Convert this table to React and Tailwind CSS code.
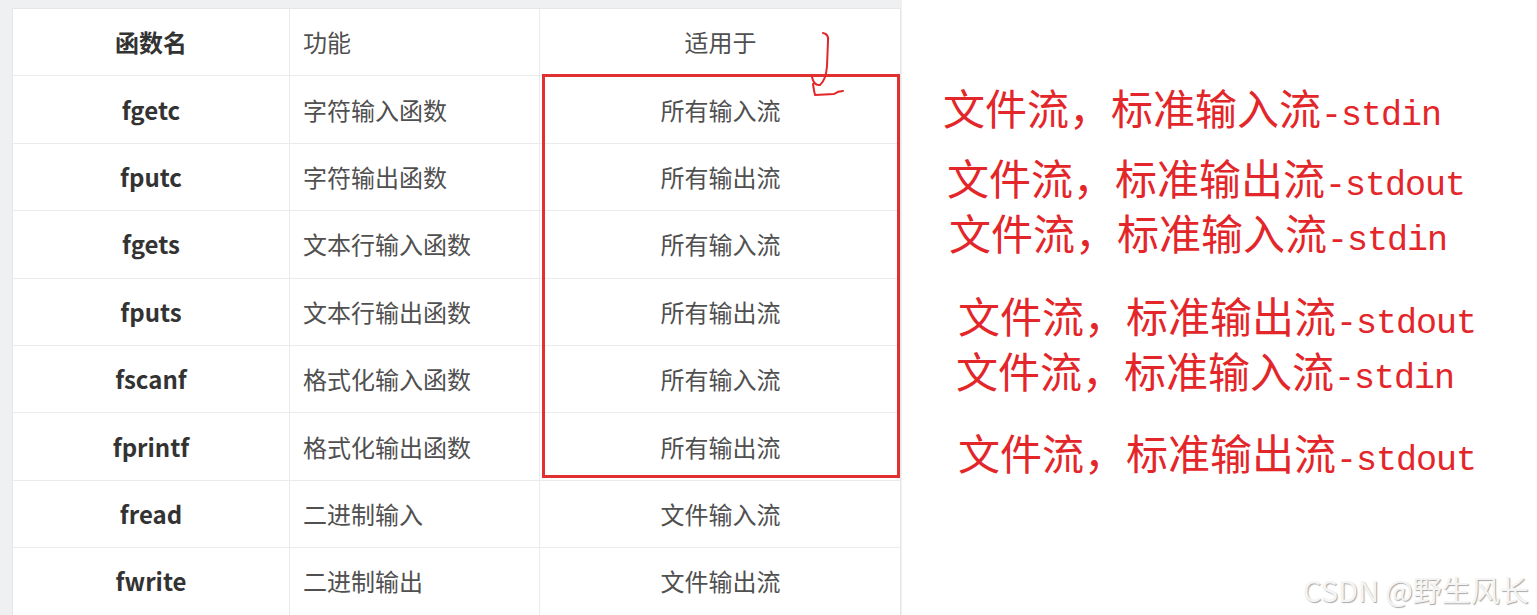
import React from 'react';

const rows = [
  { name: 'fgetc', desc: '字符输入函数', target: '所有输入流' },
  { name: 'fputc', desc: '字符输出函数', target: '所有输出流' },
  { name: 'fgets', desc: '文本行输入函数', target: '所有输入流' },
  { name: 'fputs', desc: '文本行输出函数', target: '所有输出流' },
  { name: 'fscanf', desc: '格式化输入函数', target: '所有输入流' },
  { name: 'fprintf', desc: '格式化输出函数', target: '所有输出流' },
  { name: 'fread', desc: '二进制输入', target: '文件输入流' },
  { name: 'fwrite', desc: '二进制输出', target: '文件输出流' },
];

// handwritten notes on the right, with their own offsets
const notes = [
  { io: '输入', tail: '-stdin', cls: 'mt-[86px] ml-[41px]' },
  { io: '输出', tail: '-stdout', cls: 'mt-[28px] ml-[45px]' },
  { io: '输入', tail: '-stdin', cls: 'mt-[13px] ml-[47px]' },
  { io: '输出', tail: '-stdout', cls: 'mt-[41px] ml-[56px]' },
  { io: '输入', tail: '-stdin', cls: 'mt-[13px] ml-[54px]' },
  { io: '输出', tail: '-stdout', cls: 'mt-[40px] ml-[56px]' },
];

const cell = 'flex items-center border-r border-[#ebebeb] last:border-r-0';

function App() {
  return (
    <div className="relative w-[1537px] h-[615px] bg-white flex overflow-hidden font-['Noto_Sans_CJK_SC',sans-serif]">
      <div className="w-[902px] h-full shrink-0 bg-[#eff0f1] pl-[12px] pt-[8px]">
        <div className="relative w-[889px] bg-white border-l border-t border-r border-[#e6e6e6]">
          <div className="grid grid-cols-[277px_250px_361px] h-[67.4px] border-b border-[#ebebeb] text-[24px]">
            <div className={`${cell} justify-center font-bold text-[#333]`}>函数名</div>
            <div className={`${cell} pl-[13px] text-[#505050]`}>功能</div>
            <div className={`${cell} justify-center text-[#505050]`}>适用于</div>
          </div>
          {rows.map(r => (
            <div key={r.name} className="grid grid-cols-[277px_250px_361px] h-[67.4px] border-b border-[#ebebeb] text-[24px]">
              <div className={`${cell} justify-center font-bold text-[#333]`}>{r.name}</div>
              <div className={`${cell} pl-[13px] text-[#505050]`}>{r.desc}</div>
              <div className={`${cell} justify-center text-[#505050]`}>{r.target}</div>
            </div>
          ))}
          <div className="absolute left-[529px] top-[65px] w-[358px] h-[404px] border-[3px] border-[#e0302f] pointer-events-none" />
        </div>
      </div>

      <div className="flex flex-col text-[#e3262a]">
        {notes.map((n, i) => (
          <div key={i} className={`${n.cls} h-[42px] leading-[42px] text-[42px] whitespace-nowrap`}>
            文件流，标准{n.io}流
            <span className="font-['Liberation_Mono',monospace] text-[35px] tracking-[-1px]">{n.tail}</span>
          </div>
        ))}
      </div>

      <svg className="absolute left-0 top-0 pointer-events-none" width="1537" height="615" viewBox="0 0 1537 615" fill="none">
        <path
          d="M823 33 Q829 34 828 41 L827 66 Q826 80 820 85 Q814 86 812 77 M813 84 Q814 91 815 95 L834 94 Q838 91 843 91"
          stroke="#e3262a"
          strokeWidth="2"
          strokeLinecap="round"
          strokeLinejoin="round"
        />
      </svg>

      <div className="absolute left-[1303px] top-[574px] text-[29px] leading-[30px] text-[#f4f4f4] [text-shadow:1px_1px_1px_#a8a8a8] whitespace-nowrap">
        CSDN @野生风长
      </div>
    </div>
  );
}

export default App;
